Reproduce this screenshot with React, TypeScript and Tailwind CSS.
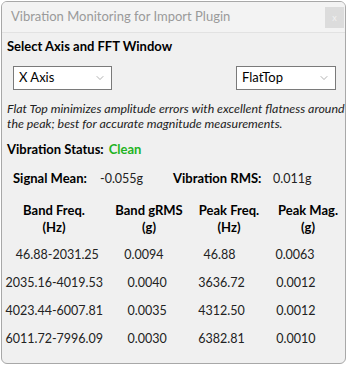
import { ChevronDown } from "lucide-react";

const bands = [
  ["46.88-2031.25", "0.0094", "46.88", "0.0063"],
  ["2035.16-4019.53", "0.0040", "3636.72", "0.0012"],
  ["4023.44-6007.81", "0.0035", "4312.50", "0.0012"],
  ["6011.72-7996.09", "0.0030", "6382.81", "0.0010"],
];

const Combo = ({ value, width }: { value: string; width: string }) => (
  <div
    className={`flex h-[24px] items-center justify-between border border-[#7a7a7a] bg-white pl-[5px] pr-[5px] text-[13px] text-black ${width}`}
  >
    <span>{value}</span>
    <ChevronDown size={12} strokeWidth={1.1} className="text-[#707070]" />
  </div>
);

const App = () => {
  return (
    <div className="h-[366px] w-[348px] bg-white pl-px pt-px" style={{ fontFamily: "Lato, sans-serif" }}>
      <div className="h-[363px] w-[345px] overflow-hidden rounded-[6px] border border-[#a8a8a8] bg-[#f0f0f0]">
        {/* title bar */}
        <div className="flex h-[31px] items-center justify-between border-b border-[#e2e2e2] bg-[#f3f3f3] pl-[9px]">
          <span className="text-[13px] text-[#9a9a9a]">Vibration Monitoring for Import Plugin</span>
          <div className="mr-px flex h-[21px] w-[19px] items-center justify-center bg-[#dcdcdc] text-[9px] leading-none text-[#f2f2f2]">
            x
          </div>
        </div>

        <div className="px-[5px]">
          <div className="mt-[4px] text-[13px] font-bold leading-[18px] text-black">Select Axis and FFT Window</div>

          <div className="mt-[11px] flex items-center justify-between pl-[6px] pr-[4px]">
            <Combo value="X Axis" width="w-[99px]" />
            <Combo value="FlatTop" width="w-[100px]" />
          </div>

          <p className="mt-[11px] w-[338px] text-[12.4px] italic leading-[15px] text-[#222]">
            Flat Top minimizes amplitude errors with excellent flatness around the peak; best for accurate magnitude measurements.
          </p>

          <div className="mt-[9px] flex gap-[5px] text-[13px] font-bold leading-[18px]">
            <span className="text-black">Vibration Status:</span>
            <span className="text-[#22b322]">Clean</span>
          </div>

          <div className="mt-[11px] flex items-baseline pl-[6px] text-[13px] leading-[18px] text-black">
            <span className="w-[87px] font-bold">Signal Mean:</span>
            <span className="w-[73px] text-[12.5px] text-[#222]">-0.055g</span>
            <span className="w-[100px] font-bold">Vibration RMS:</span>
            <span className="text-[12.5px] text-[#222]">0.011g</span>
          </div>

          <div className="mt-[14px] grid grid-cols-[94px_96px_64px_94px] text-[13px] font-bold leading-[17px] text-black">
            <div className="whitespace-nowrap text-center">Band Freq.<br />(Hz)</div>
            <div className="whitespace-nowrap text-center">Band gRMS<br />(g)</div>
            <div className="whitespace-nowrap text-center">Peak Freq.<br />(Hz)</div>
            <div className="whitespace-nowrap text-center">Peak Mag.<br />(g)</div>
          </div>

          <div className="mt-[5px]">
            {bands.map((b) => (
              <div key={b[0]} className="flex h-[28px] items-center whitespace-nowrap text-[12.5px] text-[#222]">
                <div className="flex w-[96px] justify-end">{b[0]}</div>
                <div className="flex w-[94px] justify-center">{b[1]}</div>
                <div className="flex w-[64px] justify-center">{b[2]}</div>
                <div className="flex w-[94px] justify-center">{b[3]}</div>
              </div>
            ))}
          </div>
        </div>
      </div>
    </div>
  );
};

export default App;
